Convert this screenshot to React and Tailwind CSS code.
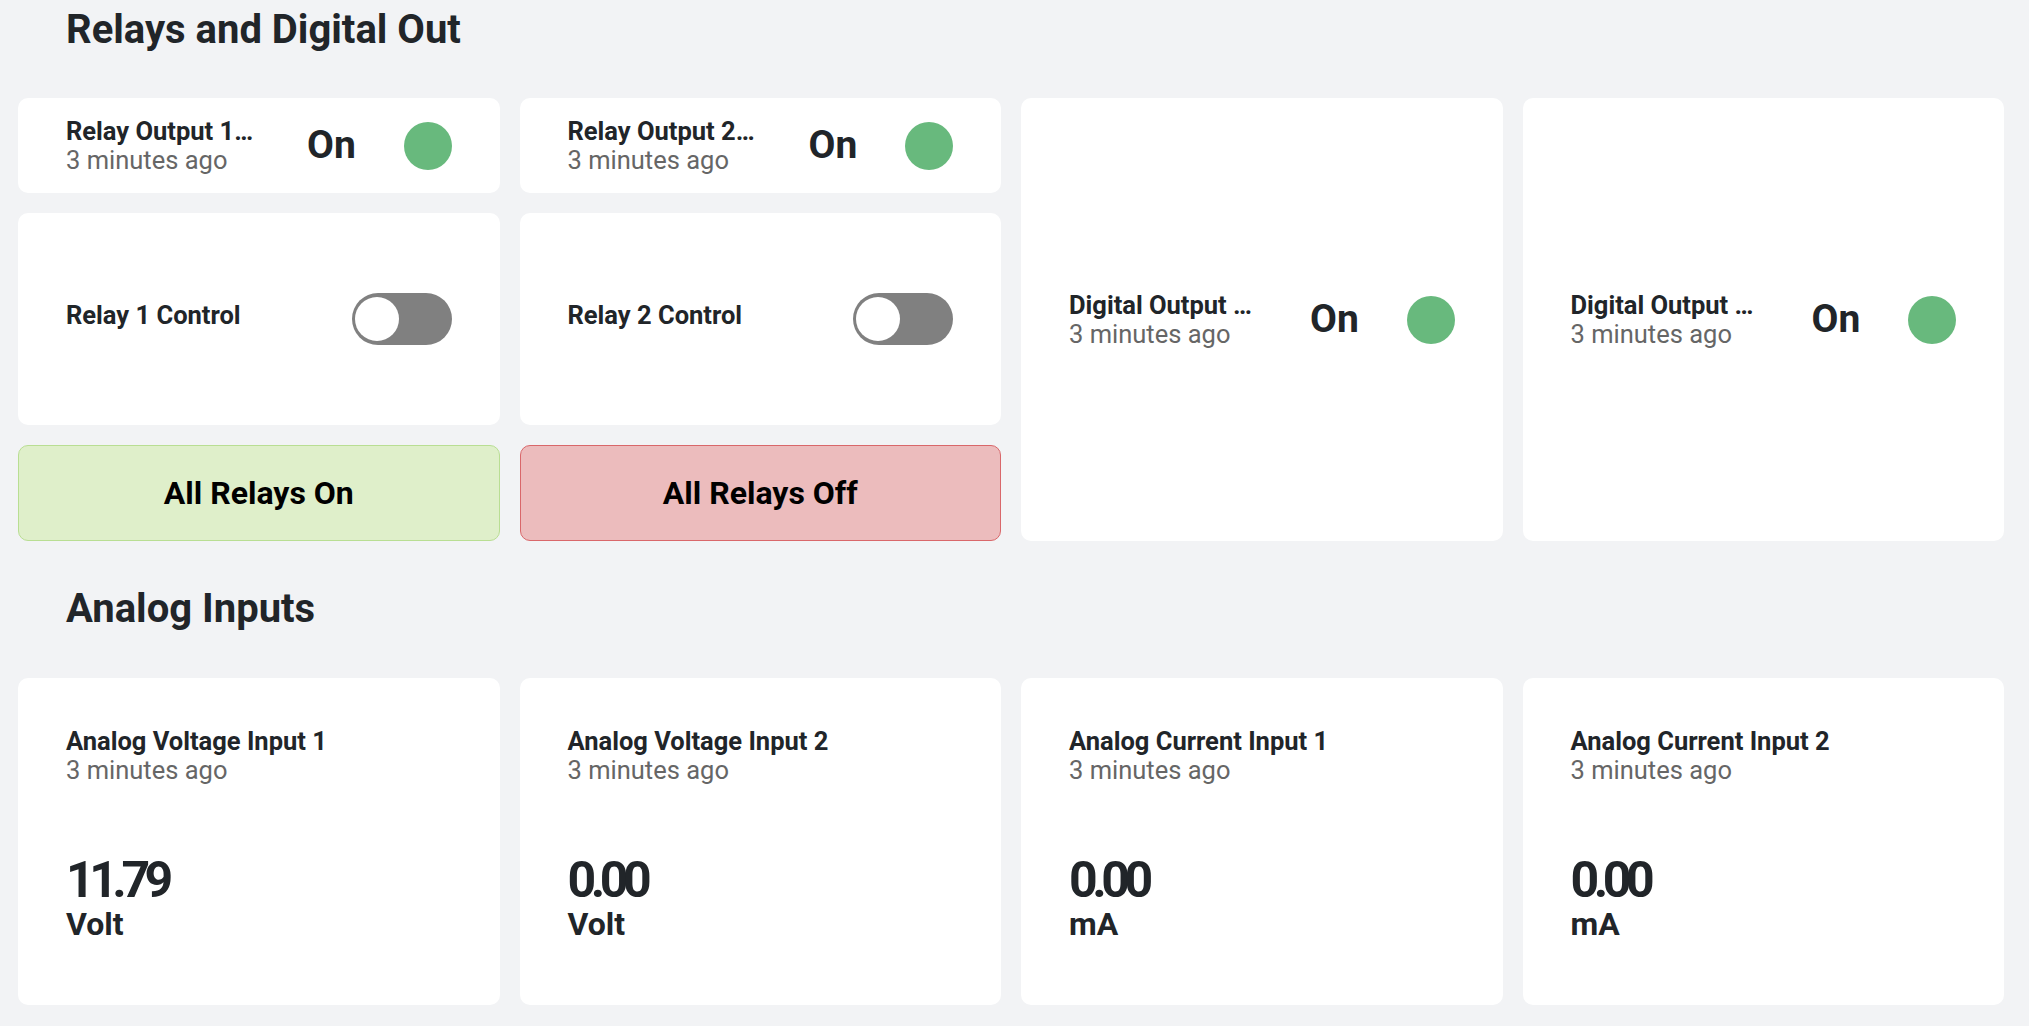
import React from 'react';

const StatusCard = ({ name, value, className = '' }) => (
    <div className={`bg-white rounded-[10px] px-12 flex items-center ${className}`}>
        <div className="w-[189px] shrink-0 min-w-0">
            <div className="text-[25.5px] leading-[30px] font-bold text-[#212529] truncate">{name}</div>
            <div className="text-[25.5px] leading-[29px] text-[#666666]">3 minutes ago</div>
        </div>
        <div className="ml-[52px] text-[39px] leading-none font-bold text-[#212529]">{value}</div>
        <div className="ml-auto w-12 h-12 rounded-full bg-[#68b97d] shrink-0" />
    </div>
);

const ControlCard = ({ label }) => (
    <div className="bg-white rounded-[10px] px-12 flex items-center justify-between">
        <div className="text-[25.5px] leading-[30px] font-bold text-[#212529] mb-[9px]">{label}</div>
        <button className="w-[100px] h-[52px] rounded-full bg-[#808080] flex items-center pl-[3px]">
            <span className="w-11 h-11 rounded-full bg-white block" />
        </button>
    </div>
);

const AnalogCard = ({ name, value, unit }) => (
    <div className="bg-white rounded-[10px] p-12 h-[327px]">
        <div className="text-[25.5px] leading-[30px] font-bold text-[#212529]">{name}</div>
        <div className="text-[25.5px] leading-[29px] text-[#666666]">3 minutes ago</div>
        <div className="mt-[70px] text-[50px] leading-[50px] font-bold tracking-[-5.5px] text-[#212529]">{value}</div>
        <div className="text-[32px] leading-[38px] font-bold text-[#212529]">{unit}</div>
    </div>
);

export default function App() {
    return (
        <div className="min-h-screen bg-[#f2f3f5] pt-[6px] pl-[18px] pr-[25px] pb-[21px]" style={{ fontFamily: 'Roboto, "Noto Sans", sans-serif' }}>
            <h1 className="pl-12 text-[40px] leading-[48px] font-bold text-[#212529]">Relays and Digital Out</h1>
            <div className="mt-[44px] grid grid-cols-4 gap-x-5 gap-y-[20px] grid-rows-[95px_212px_96px]">
                <StatusCard name="Relay Output 1 Status" value="On" />
                <StatusCard name="Relay Output 2 Status" value="On" />
                <StatusCard name="Digital Output 1 Status" value="On" className="row-span-3" />
                <StatusCard name="Digital Output 2 Status" value="On" className="row-span-3" />
                <ControlCard label="Relay 1 Control" />
                <ControlCard label="Relay 2 Control" />
                <button className="rounded-[10px] border border-[#b9de93] bg-[#dfefca] text-[32px] font-bold text-black">All Relays On</button>
                <button className="rounded-[10px] border border-[#d9676a] bg-[#ecbcbd] text-[32px] font-bold text-black">All Relays Off</button>
            </div>
            <h1 className="mt-[44px] pl-12 text-[40px] leading-[48px] font-bold text-[#212529]">Analog Inputs</h1>
            <div className="mt-[45px] grid grid-cols-4 gap-x-5">
                <AnalogCard name="Analog Voltage Input 1" value="11.79" unit="Volt" />
                <AnalogCard name="Analog Voltage Input 2" value="0.00" unit="Volt" />
                <AnalogCard name="Analog Current Input 1" value="0.00" unit="mA" />
                <AnalogCard name="Analog Current Input 2" value="0.00" unit="mA" />
            </div>
        </div>
    );
}
